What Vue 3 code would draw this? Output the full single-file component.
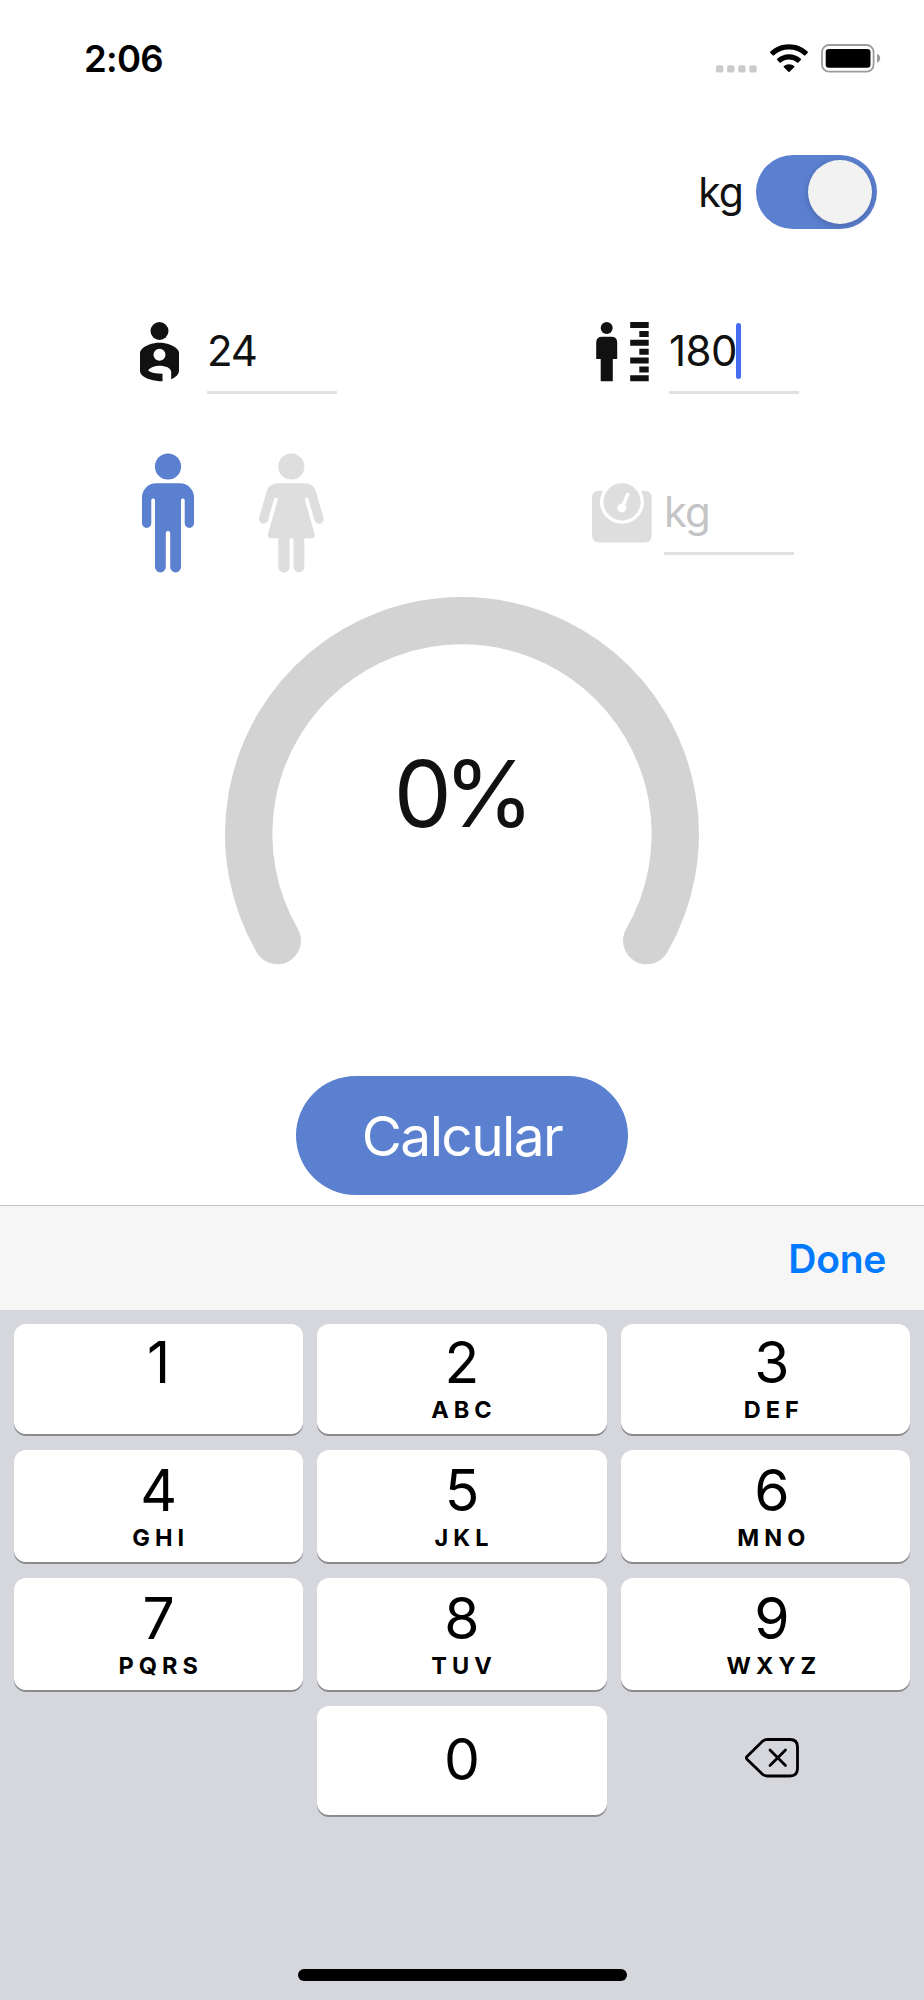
<script setup>
import { ref, reactive, computed } from 'vue'

const values = reactive({ age: "24", height: "180", weight: "" })
const active = ref("height")
const gender = ref("male")
const metric = ref(true)
const result = ref(0)

const unit = computed(() => metric.value ? "kg" : "lb")

const keys = [
    { digit: "1", letters: "" },
    { digit: "2", letters: "ABC" },
    { digit: "3", letters: "DEF" },
    { digit: "4", letters: "GHI" },
    { digit: "5", letters: "JKL" },
    { digit: "6", letters: "MNO" },
    { digit: "7", letters: "PQRS" },
    { digit: "8", letters: "TUV" },
    { digit: "9", letters: "WXYZ" }
]

function press(digit) {
    if (active.value) {
        values[active.value] += digit
    }
}

function erase() {
    if (active.value) {
        values[active.value] = values[active.value].slice(0, -1)
    }
}

function calculate() {
    const h = Number(values.height) / 100
    const w = Number(values.weight) * (metric.value ? 1 : 0.4536)
    if (!h || !w) {
        result.value = 0
        return
    }
    const sex = gender.value == "male" ? 1 : 0
    const fat = 1.2 * (w / (h * h)) + 0.23 * Number(values.age) - 10.8 * sex - 5.4
    result.value = Math.max(0, Math.round(fat))
}
</script>
<template>
    <div class="screen">
        <div class="status">
            <div class="time">2:06</div>
            <div class="status-icons">
                <svg class="dots" width="41" height="8" viewBox="0 0 41 8" fill="#cbcbcb">
                    <rect v-for="n in 4" :key="n" :x="(n - 1) * 11.1" y="0.2" width="7.4" height="7.4" rx="2.2" />
                </svg>
                <svg class="wifi" width="38" height="29" viewBox="0 0 38 29">
                    <path d="M19 .3C26.3 .3 32.8 3 37.6 7.6a.9.9 0 0 1 0 1.3l-2.3 2.4a.9.9 0 0 1-1.3 0A21.8 21.8 0 0 0 19 5.5 21.8 21.8 0 0 0 4 11.3a.9.9 0 0 1-1.3 0L.4 8.9a.9.9 0 0 1 0-1.3C5.2 3 11.7 .3 19 .3z" />
                    <path d="M19 10.3c4.5 0 8.600 1.700 11.800 4.500a.9.9 0 0 1 0 1.300l-2.400 2.400a.9.9 0 0 1-1.200 0A12.300 12.300 0 0 0 19 15.500c-3.100 0-6 1.100-8.200 3a.9.9 0 0 1-1.200 0l-2.400-2.400a.9.9 0 0 1 0-1.300A17.800 17.800 0 0 1 19 10.300z" />
                    <path d="M19 20.3c2 0 3.700.7 5.100 1.800a.8.8 0 0 1 0 1.200l-4.500 4.500a.8.8 0 0 1-1.200 0l-4.500-4.500a.8.8 0 0 1 0-1.200A8.200 8.200 0 0 1 19 20.300z" />
                </svg>
                <svg class="battery" width="60" height="29" viewBox="0 0 60 29">
                    <rect x="1" y="1" width="51.6" height="26.6" rx="7" fill="none" stroke="#9c9c9c" stroke-width="1.8" />
                    <rect x="4.7" y="4.9" width="44.8" height="18.9" rx="3.2" />
                    <path d="M56 9.8c2 .8 3.200 2.400 3.200 4.500S58 18 56 18.800z" fill="#9c9c9c" />
                </svg>
            </div>
        </div>

        <div class="unit-row">
            <span class="unit">{{ unit }}</span>
            <div class="switch" :class="{ off: !metric }" @click="metric = !metric">
                <div class="knob"></div>
            </div>
        </div>

        <div class="row">
            <div class="field age" @click="active = 'age'">
                <svg width="39" height="60" viewBox="0 0 39 60" fill="#111">
                    <circle cx="19.5" cy="9" r="9" />
                    <path fill-rule="evenodd" d="M19.5 20.7C26.5 20.7 33.5 23.2 37.3 27.2Q39 29 39 31V49Q39 51.5 37 53.5Q34.5 55.9 31.2 57.2V50C31 46 25.5 43.8 19.5 43.8C14.5 43.8 10.5 45.3 8 48.5C11 50.7 16 51.8 22.5 51.8V59.3C14 59.3 5.5 57 1.5 52.8Q0 51 0 49V31Q0 29 1.7 27.2C5.5 23.2 12.5 20.7 19.5 20.7ZM19.5 26.7A6 6 0 1 0 19.5 38.7A6 6 0 1 0 19.5 26.7Z" />
                </svg>
                <div class="input">{{ values.age }}<i v-if="active == 'age'" class="caret"></i></div>
            </div>
            <div class="field height" @click="active = 'height'">
                <svg width="53" height="60" viewBox="0 0 53 60" fill="#111">
                    <circle cx="10.7" cy="6" r="6" />
                    <path d="M6 14.7H15.5Q21.2 14.7 21.2 20.5V37H16.8V59.3H4.7V37H.2V20.5Q.2 14.7 6 14.7Z" />
                    <path d="M34.2 0h18.5v6H34.2zM34.2 17.8h18.5v6H34.2zM34.2 35.5h18.5v6H34.2zM34.2 53.3h18.5v6H34.2zM43.3 8.9h9.4v6h-9.4zM43.3 26.7h9.4v6h-9.4zM43.3 44.4h9.4v6h-9.4z" />
                </svg>
                <div class="input">{{ values.height }}<i v-if="active == 'height'" class="caret"></i></div>
            </div>
        </div>

        <div class="row second">
            <div class="genders">
                <svg :class="{ on: gender == 'male' }" width="52" height="120" viewBox="0 0 52 120" @click="gender = 'male'">
                    <circle cx="26" cy="13.5" r="13.1" />
                    <path d="M14 30.3H38A14 14 0 0 1 52 44.3V70.3A4.5 4.5 0 0 1 42.7 70.3V47A1.900 1.900 0 0 0 39 47V114A5.400 5.400 0 0 1 28.200 114V80.200A2.200 2.200 0 0 0 23.800 80.200V114A5.400 5.400 0 0 1 13 114V47A1.900 1.900 0 0 0 9.300 47V70.300A4.500 4.500 0 0 1 0 70.300V44.3A14 14 0 0 1 14 30.3Z" />
                </svg>
                <svg :class="{ on: gender == 'female' }" width="65" height="120" viewBox="0 0 65 120" @click="gender = 'female'">
                    <circle cx="32.3" cy="13.5" r="13.1" />
                    <path d="M19.5 30.3H45.1C51 30.3 55.3 33 56.9 38.5L64.4 64.5A4.600 4.600 0 0 1 55.600 67.700L49.500 46A1.800 1.800 0 0 0 46 47.200L55.500 80.500Q56.500 85.300 52.500 85.300H45.300V114A5.400 5.400 0 0 1 34.500 114V86.500Q34.500 85.300 33.600 85.300H31.800Q30.600 85.300 30.600 86.500V114A5.500 5.500 0 0 1 19.300 114V85.300H12.100Q8.100 85.300 9.100 80.500L18.600 47.200A1.800 1.800 0 0 0 15.100 46L9 67.700A4.600 4.600 0 0 1 .2 64.500L7.700 38.500C9.300 33 13.600 30.3 19.5 30.3Z" />
                </svg>
            </div>
            <div class="field weight" @click="active = 'weight'">
                <svg width="60" height="60" viewBox="0 0 60 60" fill="#dedede">
                    <path d="M7.5 7.7H11A22 22 0 1 0 49 7.7H52.5Q59.7 7.7 59.7 15V52Q59.7 59.5 52.5 59.5H7.5Q0 59.5 0 52V15Q0 7.7 7.5 7.7Z" />
                    <circle cx="30" cy="18.8" r="18.6" />
                    <path d="M35.7 11.3L30 24.8" stroke="#fff" stroke-width="3.5" stroke-linecap="round" />
                    <circle cx="29.9" cy="24.9" r="4.5" fill="#fff" />
                </svg>
                <div class="input">
                    <template v-if="values.weight">{{ values.weight }}</template>
                    <span v-else class="placeholder">{{ unit }}</span>
                    <i v-if="active == 'weight'" class="caret"></i>
                </div>
            </div>
        </div>

        <div class="gauge">
            <svg width="474" height="368" viewBox="0 0 474 368">
                <path d="M52.3 343.7A213.3 213.3 0 1 1 421.7 343.7" fill="none" stroke="#d3d3d3" stroke-width="47.3" stroke-linecap="round" />
            </svg>
            <div class="percent">{{ result }}%</div>
        </div>

        <button class="calculate" @click="calculate()">Calcular</button>

        <div class="toolbar">
            <span class="done" @click="active = ''">Done</span>
        </div>
        <div class="keyboard">
            <div class="keys">
                <div v-for="k in keys" :key="k.digit" class="key" @click="press(k.digit)">
                    <span class="digit">{{ k.digit }}</span>
                    <span class="letters">{{ k.letters }}</span>
                </div>
                <div></div>
                <div class="key zero" @click="press('0')">
                    <span class="digit">0</span>
                </div>
                <div class="erase" @click="erase()">
                    <svg width="54" height="40" viewBox="0 0 54 40" fill="none" stroke="#000" stroke-width="2.8" stroke-linecap="round" stroke-linejoin="round">
                        <path d="M22 1.5H45Q52.5 1.5 52.5 9V30.5Q52.5 38 45 38H22Q19.5 38 17.5 36.2L2 21.2Q.8 19.8 2 18.4L17.5 3.3Q19.5 1.5 22 1.5Z" />
                        <path d="M25 12L40.5 27.5M40.5 12L25 27.5" />
                    </svg>
                </div>
            </div>
            <div class="home"></div>
        </div>
    </div>
</template>
<style>
body {
    margin: 0;
    background-color: #fff;
}
</style>
<style scoped>
.screen {
    width: 924px;
    height: 2000px;
    display: flex;
    flex-direction: column;
    overflow: hidden;
    background-color: #fff;
    color: #111;
    font-family: Inter, "Liberation Sans", sans-serif;
}

svg {
    display: block;
    flex: none;
}

.status {
    height: 75px;
    padding: 43px 43px 0 84px;
    box-sizing: border-box;
    display: flex;
    justify-content: space-between;
    color: #000;
}

.time {
    font-size: 36.5px;
    font-weight: 600;
    line-height: 32px;
    letter-spacing: -0.7px;
}

.status-icons {
    height: 30px;
    display: flex;
    align-items: flex-end;
}

.wifi {
    margin-left: 13px;
}

.battery {
    margin-left: 13px;
}

.unit-row {
    margin-top: 80px;
    padding-right: 47px;
    height: 74px;
    display: flex;
    justify-content: flex-end;
    align-items: center;
}

.unit {
    font-size: 41px;
    letter-spacing: -1px;
    margin-right: 13px;
}

.switch {
    width: 121px;
    height: 74px;
    padding: 5px;
    box-sizing: border-box;
    border-radius: 37px;
    background-color: #5b80d0;
    display: flex;
    justify-content: flex-end;
    cursor: pointer;
}

.switch.off {
    justify-content: flex-start;
    background-color: #ccc;
}

.knob {
    width: 64px;
    height: 64px;
    border-radius: 50%;
    background-color: #f2f2f2;
    box-shadow: 0 2px 7px rgba(0, 0, 0, 0.2);
}

.row {
    height: 72px;
    margin-top: 93px;
    display: flex;
    justify-content: space-between;
}

.row.second {
    height: 120px;
    margin-top: 59px;
}

.field {
    display: flex;
    align-items: flex-start;
}

.field.age {
    gap: 28px;
    margin-left: 140px;
}

.field.height {
    gap: 20px;
    margin-right: 125px;
}

.field.weight {
    gap: 12px;
    margin: 30px 130px 0 0;
}

.input {
    width: 130px;
    height: 72px;
    box-sizing: border-box;
    border-bottom: 3px solid #e1e1e1;
    display: flex;
    font-size: 42px;
    line-height: 57px;
    letter-spacing: -1.2px;
}

.height .input {
    letter-spacing: -0.5px;
}

.placeholder {
    color: #c4c4c6;
}

.caret {
    width: 5px;
    height: 56px;
    margin: 1px 0 0 -1px;
    border-radius: 2.5px;
    background-color: #456cf2;
}

.genders {
    display: flex;
    gap: 65px;
    margin-left: 142px;
}

.genders svg {
    fill: #dedede;
    cursor: pointer;
}

.genders svg.on {
    fill: #5b80d0;
}

.gauge {
    margin: 24px auto 0;
    display: grid;
}

.gauge svg,
.percent {
    grid-area: 1 / 1;
}

.percent {
    margin-top: 147px;
    text-align: center;
    font-size: 92px;
    line-height: 100px;
    letter-spacing: -8px;
    padding-right: 4px;
}

.calculate {
    width: 332px;
    height: 119px;
    margin: 111px auto 0;
    padding: 0;
    border: none;
    border-radius: 60px;
    background-color: #5b80d0;
    color: #fff;
    font-family: inherit;
    font-size: 55px;
    letter-spacing: -1.6px;
    flex: none;
    cursor: pointer;
}

.toolbar {
    height: 105px;
    margin-top: 10px;
    padding-right: 38px;
    box-sizing: border-box;
    border-top: 1px solid #c4c4c6;
    background-color: #f6f6f6;
    display: flex;
    justify-content: flex-end;
    align-items: center;
    flex: none;
}

.done {
    color: #007aff;
    font-size: 39px;
    font-weight: 600;
    letter-spacing: -0.3px;
    cursor: pointer;
}

.keyboard {
    flex: 1;
    padding: 14px 14px 19px;
    background-color: #d6d7dc;
    color: #000;
    display: flex;
    flex-direction: column;
    justify-content: space-between;
}

.keys {
    display: grid;
    grid-template-columns: repeat(3, 1fr);
    grid-template-rows: 110px 112px 112px 109px;
    gap: 16px 14px;
}

.key {
    border-radius: 12px;
    background-color: #fff;
    box-shadow: 0 2px 0 #8b8c90;
    display: flex;
    flex-direction: column;
    justify-content: flex-end;
    align-items: center;
    padding-bottom: 10px;
    cursor: pointer;
}

/* the last column sits a little off centre */
.key:nth-child(3n),
.erase {
    padding-left: 13px;
}

.digit {
    font-size: 57px;
    line-height: 62px;
}

.letters {
    height: 28px;
    font-size: 23.5px;
    font-weight: 700;
    line-height: 28px;
    letter-spacing: 5px;
    padding-left: 4px;
    margin-top: 2px;
}

.key.zero {
    justify-content: center;
    padding-bottom: 2px;
}

.erase {
    display: flex;
    justify-content: center;
    align-items: center;
    padding-bottom: 5px;
    cursor: pointer;
}

.home {
    width: 329px;
    height: 12px;
    margin: 0 auto;
    border-radius: 6px;
    background-color: #000;
}
</style>
